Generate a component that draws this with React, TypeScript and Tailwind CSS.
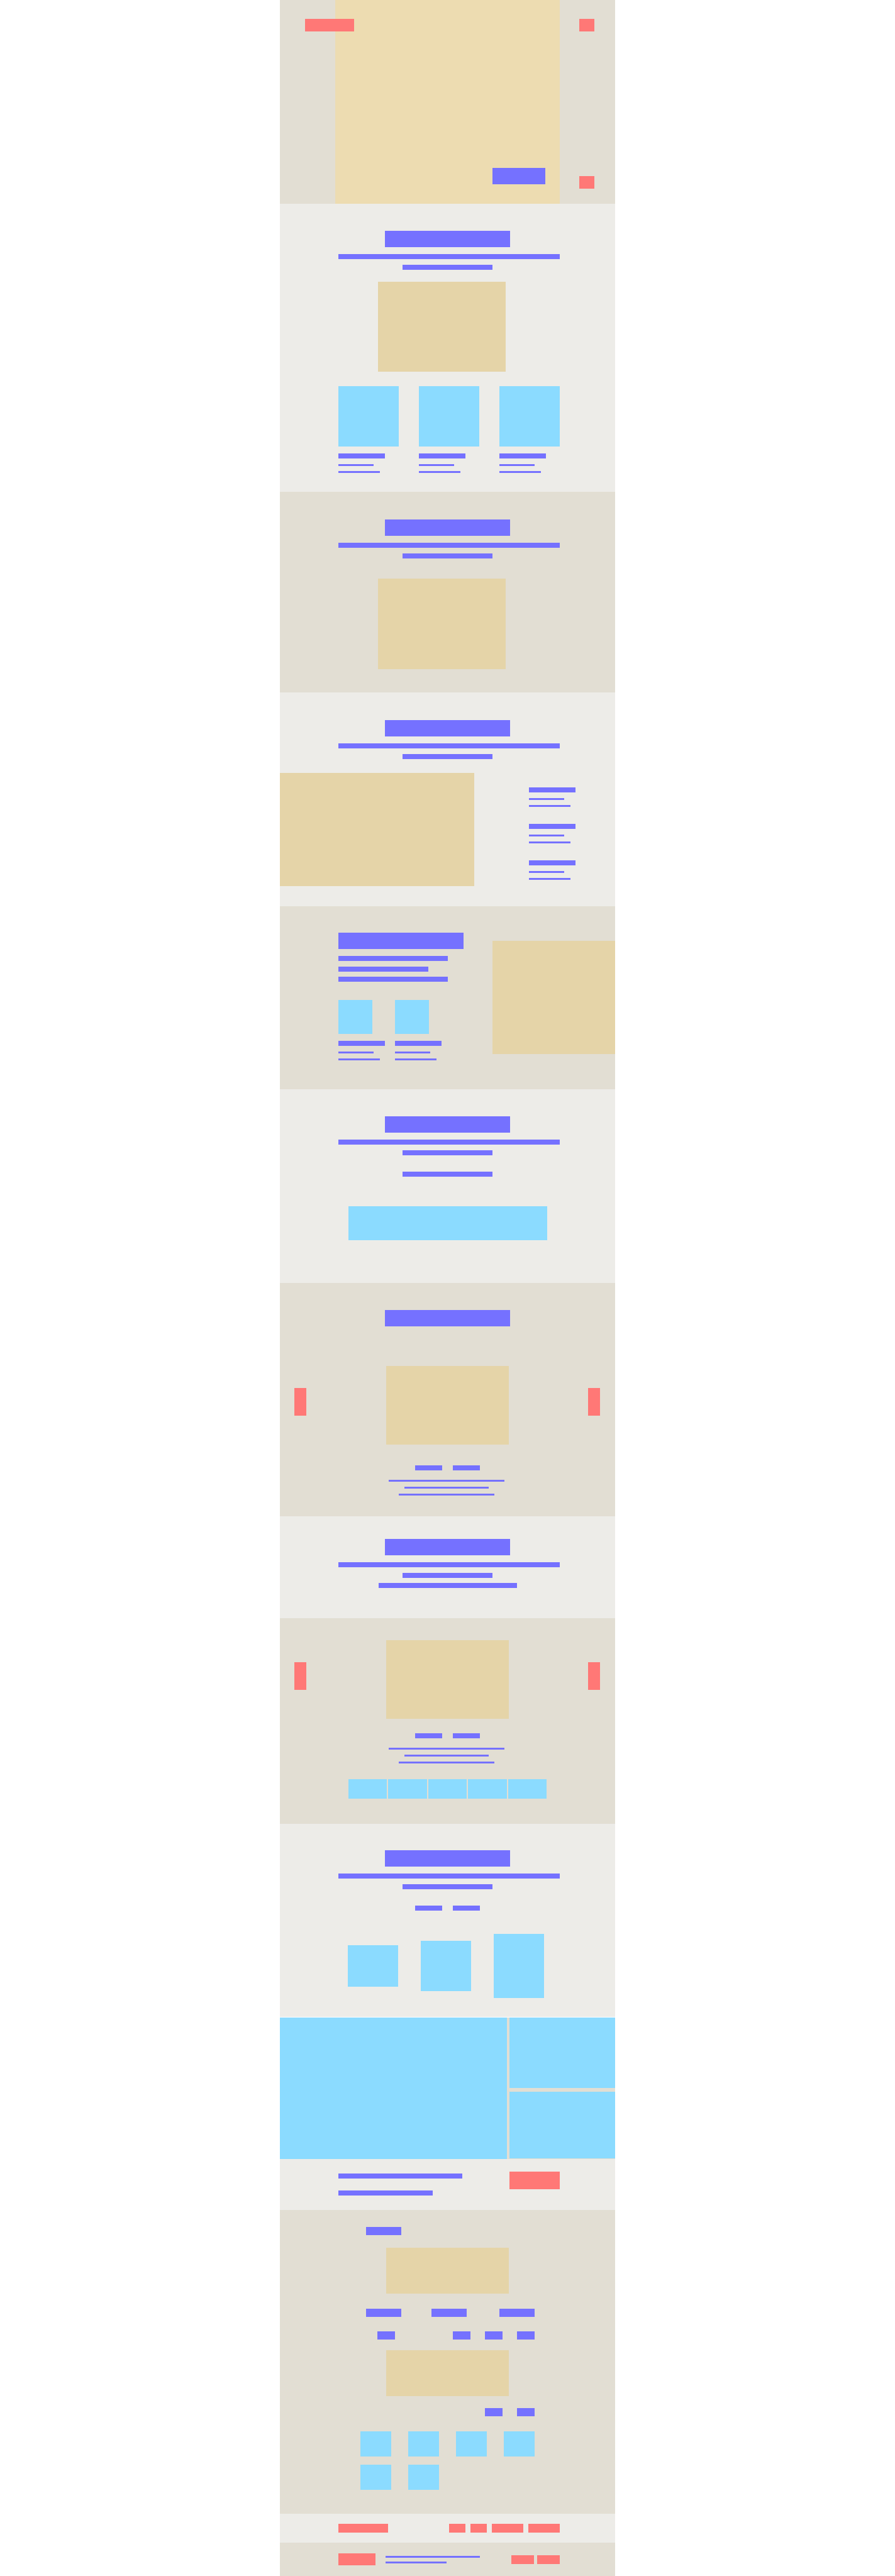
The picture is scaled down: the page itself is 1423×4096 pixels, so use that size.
import type { ReactNode } from "react";

const cx = (...parts: (string | undefined)[]) => parts.filter(Boolean).join(" ");

type BlockProps = { className?: string };

/* Purple text placeholder. */
const Bar = ({ className }: BlockProps) => <div className={cx("bg-[#7571ff]", className)} />;

/* Sand-coloured picture placeholder. */
const Picture = ({ className }: BlockProps) => <div className={cx("bg-[#e5d4a8]", className)} />;

/* Light blue card placeholder. */
const Tile = ({ className }: BlockProps) => <div className={cx("bg-[#8bdbff]", className)} />;

const Action = ({ label, className }: BlockProps & { label: string }) => (
  <button type="button" aria-label={label} className={cx("block shrink-0 bg-[#ff7876]", className)} />
);

const NavLink = ({ label, className }: BlockProps & { label: string }) => (
  <a href="#" aria-label={label} className={cx("block shrink-0 bg-[#ff7876]", className)} />
);

const Section = ({ dark, className, children }: BlockProps & { dark?: boolean; children: ReactNode }) => (
  <section className={cx(dark ? "bg-[#e2ded3]" : "bg-[#edece8]", className)}>{children}</section>
);

const Title = () => <Bar className="mx-auto h-[26px] w-[199px]" />;

const Heading = () => (
  <div>
    <Title />
    <Bar className="mt-[11px] mr-[88px] ml-[93px] h-2" />
    <Bar className="mx-auto mt-[9px] h-2 w-[143px]" />
  </div>
);

const Caption = () => (
  <div className="w-[74px]">
    <Bar className="h-2" />
    <Bar className="mt-[9px] h-[3px] w-14" />
    <Bar className="mt-2 h-[3px] w-[66px]" />
  </div>
);

const Pair = ({ className }: BlockProps) => (
  <div className={cx("flex justify-center gap-[17px]", className)}>
    <Bar className="h-2 w-[43px]" />
    <Bar className="h-2 w-[43px]" />
  </div>
);

const Slider = () => (
  <div className="flex items-start justify-between pr-6 pl-[23px]">
    <Action label="Previous" className="mt-[35px] h-11 w-[19px]" />
    <Picture className="h-[125px] w-[195px]" />
    <Action label="Next" className="mt-[35px] h-11 w-[19px]" />
  </div>
);

const Quote = () => (
  <div className="mt-[15px] flex flex-col items-center gap-2 pr-1">
    <Bar className="h-[3px] w-[184px]" />
    <Bar className="h-[3px] w-[134px]" />
    <Bar className="h-[3px] w-[152px]" />
  </div>
);

export default function App() {
  return (
    <main className="mx-auto w-full max-w-[533px]">
      <Section dark className="flex">
        <div className="relative min-h-[324px] flex-1">
          <div className="mr-[88px] ml-[88px] flex h-[324px] items-end justify-end bg-[#eddcb1] pr-[23px] pb-[31px]">
            <Bar className="h-[26px] w-[84px]" />
          </div>
          <NavLink label="Home" className="absolute top-[30px] left-10 h-5 w-[78px]" />
          <Action label="Menu" className="absolute top-[30px] right-[33px] h-5 w-6" />
          <Action label="Scroll down" className="absolute right-[33px] bottom-6 h-5 w-6" />
        </div>
      </Section>

      <Section className="pt-[43px] pb-[30px]">
        <Heading />
        <Picture className="mt-[19px] ml-[156px] h-[143px] w-[203px]" />
        <div className="mt-[23px] mr-[88px] ml-[93px] grid grid-cols-3 gap-8">
          {[0, 1, 2].map((i) => (
            <div key={i}>
              <Tile className="mb-[11px] h-24" />
              <Caption />
            </div>
          ))}
        </div>
      </Section>

      <Section dark className="pt-11 pb-[37px]">
        <Heading />
        <Picture className="mt-8 ml-[156px] h-36 w-[203px]" />
      </Section>

      <Section className="pt-11 pb-8">
        <Heading />
        <div className="mt-[22px] flex">
          <Picture className="h-[180px] w-[309px]" />
          <div className="mt-[23px] ml-[87px] flex flex-col gap-[27px]">
            <Caption />
            <Caption />
            <Caption />
          </div>
        </div>
      </Section>

      <Section dark className="flex items-start justify-between">
        <div className="pt-[42px] pb-[46px] pl-[93px]">
          <Bar className="h-[26px] w-[199px]" />
          <Bar className="mt-[11px] h-2 w-[174px]" />
          <Bar className="mt-[9px] h-2 w-[143px]" />
          <Bar className="mt-2 h-2 w-[174px]" />
          <div className="mt-[29px] flex gap-4">
            {[0, 1].map((i) => (
              <div key={i}>
                <Tile className="mb-[11px] h-[54px] w-[54px]" />
                <Caption />
              </div>
            ))}
          </div>
        </div>
        <Picture className="mt-[55px] h-[180px] w-[195px]" />
      </Section>

      <Section className="pt-[43px] pb-[68px]">
        <Heading />
        <Bar className="mx-auto mt-[26px] h-2 w-[143px]" />
        <Tile className="mx-auto mt-[47px] h-[54px] w-[316px]" />
      </Section>

      <Section dark className="pt-[43px] pb-[33px]">
        <Title />
        <div className="mt-[63px]">
          <Slider />
        </div>
        <Pair className="mt-[33px]" />
        <Quote />
      </Section>

      <Section className="pt-9 pb-12">
        <Heading />
        <Bar className="mx-auto mt-2 h-2 w-[220px]" />
      </Section>

      <Section dark className="pt-[35px] pb-10">
        <Slider />
        <Pair className="mt-[23px]" />
        <Quote />
        <div className="mx-auto mt-[25px] grid w-[316px] grid-cols-5 gap-0.5">
          {[0, 1, 2, 3, 4].map((i) => (
            <Tile key={i} className="h-[31px]" />
          ))}
        </div>
      </Section>

      <Section className="pt-[42px] pb-[30px]">
        <Heading />
        <Pair className="mt-[26px]" />
        <div className="mt-[37px] ml-[108px] flex items-center gap-9">
          <Tile className="h-[66px] w-20" />
          <Tile className="h-20 w-20" />
          <Tile className="h-[102px] w-20" />
        </div>
      </Section>

      <Section dark className="mt-px flex gap-1">
        <Tile className="h-[225px] w-[361px]" />
        <div className="flex flex-1 flex-col gap-1.5 pb-px">
          <Tile className="h-28" />
          <Tile className="flex-1" />
        </div>
      </Section>

      <Section className="flex items-start justify-between pr-[88px] pb-[23px] pl-[93px]">
        <div className="pt-[23px]">
          <Bar className="h-2 w-[197px]" />
          <Bar className="mt-[19px] h-2 w-[150px]" />
        </div>
        <Action label="Contact" className="mt-5 h-7 w-20" />
      </Section>

      <Section dark className="pt-[27px] pr-32 pb-[38px] pl-[137px]">
        <Bar className="h-[13px] w-14" />
        <Picture className="mt-5 ml-8 h-[73px] w-[195px]" />
        <div className="mt-6 flex">
          <Bar className="h-[13px] w-14" />
          <Bar className="ml-12 h-[13px] w-14" />
          <Bar className="ml-auto h-[13px] w-14" />
        </div>
        <div className="mt-[23px] flex justify-end gap-[23px]">
          <Bar className="mr-auto ml-[18px] h-[13px] w-7" />
          <Bar className="h-[13px] w-7" />
          <Bar className="h-[13px] w-7" />
          <Bar className="h-[13px] w-7" />
        </div>
        <Picture className="mt-[17px] ml-8 h-[73px] w-[195px]" />
        <div className="mt-[19px] flex justify-end gap-[23px]">
          <Bar className="h-[13px] w-7" />
          <Bar className="h-[13px] w-7" />
        </div>
        <div className="mt-6 -ml-[9px] grid grid-cols-4 gap-x-[27px] gap-y-[13px]">
          {[0, 1, 2, 3, 4, 5].map((i) => (
            <Tile key={i} className="h-10" />
          ))}
        </div>
      </Section>

      <nav className="flex justify-between bg-[#edece8] py-4 pr-[88px] pl-[93px]">
        <NavLink label="Brand" className="h-3.5 w-[79px]" />
        <div className="flex gap-2">
          <NavLink label="About" className="h-3.5 w-[26px]" />
          <NavLink label="Work" className="h-3.5 w-[26px]" />
          <NavLink label="Services" className="h-3.5 w-[50px]" />
          <NavLink label="Contact" className="h-3.5 w-[50px]" />
        </div>
      </nav>

      <footer className="flex items-center bg-[#e2ded3] py-[17px] pr-[88px] pl-[93px]">
        <NavLink label="Home" className="h-[19px] w-[59px]" />
        <div className="ml-4 flex flex-col gap-1.5">
          <Bar className="h-[3px] w-[150px]" />
          <Bar className="h-[3px] w-[97px]" />
        </div>
        <div className="ml-auto flex gap-[5px]">
          <NavLink label="Privacy" className="h-3.5 w-9" />
          <NavLink label="Terms" className="h-3.5 w-9" />
        </div>
      </footer>
    </main>
  );
}
